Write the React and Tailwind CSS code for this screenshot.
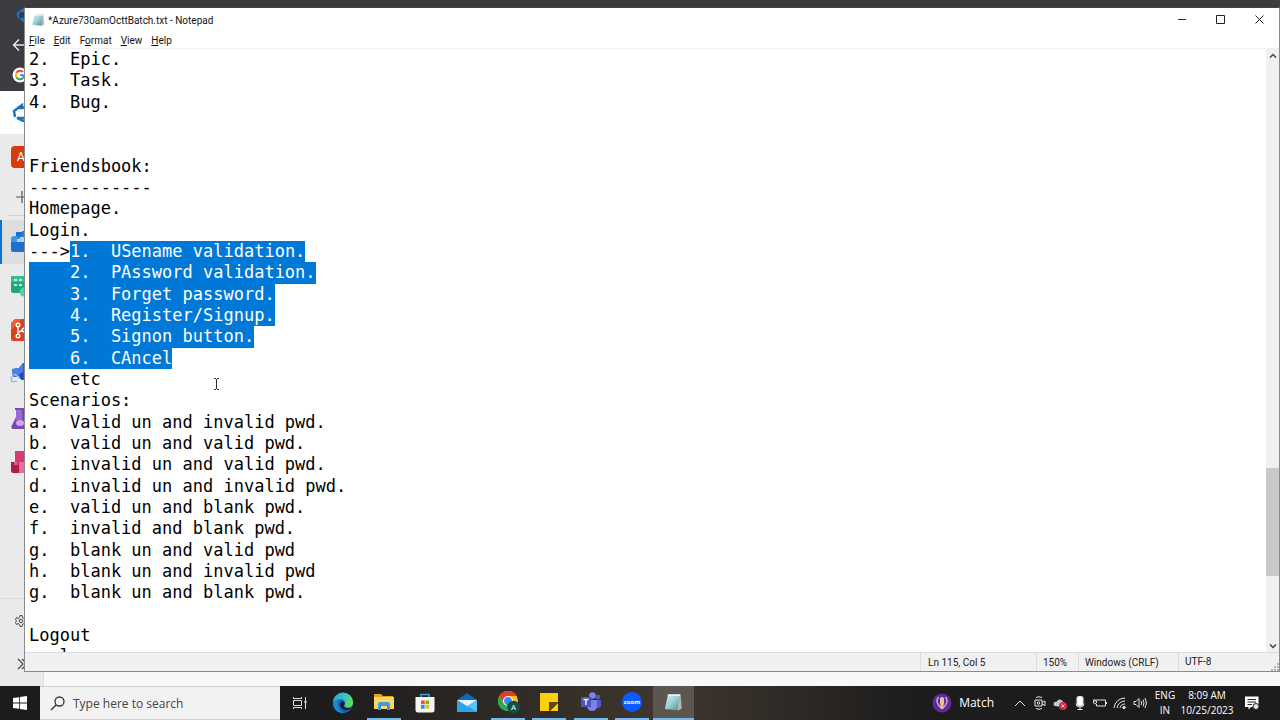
import React from 'react';

const LINES = [
  { text: '2.  Epic.' },
  { text: '3.  Task.' },
  { text: '4.  Bug.' },
  { text: '' },
  { text: '' },
  { text: 'Friendsbook:' },
  { text: '------------' },
  { text: 'Homepage.' },
  { text: 'Login.' },
  { text: '--->', selected: '1.  USename validation.' },
  { text: '', selected: '    2.  PAssword validation.' },
  { text: '', selected: '    3.  Forget password.' },
  { text: '', selected: '    4.  Register/Signup.' },
  { text: '', selected: '    5.  Signon button.' },
  { text: '', selected: '    6.  CAncel' },
  { text: '    etc' },
  { text: 'Scenarios:' },
  { text: 'a.  Valid un and invalid pwd.' },
  { text: 'b.  valid un and valid pwd.' },
  { text: 'c.  invalid un and valid pwd.' },
  { text: 'd.  invalid un and invalid pwd.' },
  { text: 'e.  valid un and blank pwd.' },
  { text: 'f.  invalid and blank pwd.' },
  { text: 'g.  blank un and valid pwd' },
  { text: 'h.  blank un and invalid pwd' },
  { text: 'g.  blank un and blank pwd.' },
  { text: '' },
  { text: 'Logout' },
  { text: '   l' },
  { text: '' },
];

const NotepadIcon = ({ className }) => (
  <svg viewBox="0 0 16 16" className={className}>
    <defs>
      <linearGradient id="pad" x1="0" y1="0" x2="1" y2="1">
        <stop offset="0" stopColor="#d9f1f1" />
        <stop offset="0.5" stopColor="#9ccfd3" />
        <stop offset="1" stopColor="#3f8f98" />
      </linearGradient>
    </defs>
    <path d="M5 2 L14 1.5 L15 13 L12 15 Z" fill="#b9b7ab" />
    <path d="M4 2 L13.5 2 L11.5 14.5 L1.5 13.5 Z" fill="url(#pad)" />
    <path d="M4 2 L13.5 2 L13.3 3.2 L3.8 3.2 Z" fill="#eef6f5" />
  </svg>
);

const DevOpsMark = ({ className }) => (
  <svg viewBox="0 0 20 20" className={className} fill="none" stroke="#1277c9" strokeWidth="2.4">
    <path d="M3 14 L2 8 L6 5 H11 L16 2 V16 L11 18 L5 15 H15" />
    <path d="M6 5 L10 2 V5" />
  </svg>
);

const GoogleIcon = () => (
  <svg viewBox="0 0 16 16" className="w-4 h-4">
    <circle cx="8" cy="8" r="7.5" fill="#fff" />
    <g fill="none" strokeWidth="2">
      <path d="M4.4 5.8 A4.2 4.2 0 0 1 11 5" stroke="#ea4335" />
      <path d="M4.4 10.2 A4.2 4.2 0 0 1 4.4 5.8" stroke="#fbbc05" />
      <path d="M11 11 A4.2 4.2 0 0 1 4.4 10.2" stroke="#34a853" />
      <path d="M8 8.2 H12.2 A4.2 4.2 0 0 1 11 11" stroke="#4285f4" />
    </g>
  </svg>
);

const BoardsIcon = () => (
  <svg viewBox="0 0 24 24" className="w-6 h-6">
    <path d="M1 9 H6 V2 H22 V22 H3 Q1 22 1 20 Z" fill="#1d6fd0" />
    <path d="M1 9 Q1 6 4 6 H24 V12 H1 Z" fill="#3b97ea" />
    <path d="M7 6 H12 V1 H20 V8 H7 Z" fill="#2a7edb" />
    <path d="M7 9 H10 V7 H15 V9 H24 V12 H7 Z" fill="#a9d6fa" />
  </svg>
);

const PlansIcon = () => (
  <svg viewBox="0 0 24 24" className="w-6 h-6">
    <path d="M1 2 H24 V19 H3 Q1 19 1 17 Z" fill="#1fa97a" />
    <path d="M1 2 H24 V8 H1 Z" fill="#33c08f" />
    <path d="M4 6 H7 M9 6 H12 M4 11 H7 M9 11 H12" stroke="#b7efd9" strokeWidth="2" />
    <circle cx="14" cy="18" r="4.5" fill="#54d3a4" />
  </svg>
);

const ReposIcon = () => (
  <svg viewBox="0 0 24 24" className="w-6 h-6">
    <path d="M5 1 H24 V23 H3 Q1 23 1 21 V5 Z" fill="#d8431c" />
    <path d="M1 5 L5 1 H12 L1 12 Z" fill="#e7623a" />
    <g fill="none" stroke="#fff" strokeWidth="1.4">
      <circle cx="8" cy="7" r="1.8" />
      <circle cx="8" cy="18" r="1.8" />
      <circle cx="14" cy="12" r="1.8" />
      <path d="M8 9 V16 M9 14 L12.5 12.5" />
    </g>
  </svg>
);

const PipelinesIcon = () => (
  <svg viewBox="0 0 24 24" className="w-6 h-6">
    <path d="M2 7 L9 6 L13 1 L24 1 V18 H12 L8 15 L3 15 Z" fill="#2b5fd0" />
    <path d="M2 7 L9 6 L13 1 V10 L6 14 L3 15 Z" fill="#4a80e6" />
    <path d="M8 15 L13 10 V18 Z" fill="#1c46a8" />
    <path d="M1.5 14 V19.5 H7 M4 12 L10 16" fill="none" stroke="#9dbcf2" strokeWidth="1.6" />
  </svg>
);

const TestIcon = () => (
  <svg viewBox="0 0 24 24" className="w-6 h-6">
    <path d="M5 2 H18 V4 H17 V10 L23 21 Q23 23 21 23 H3 Q1 23 1.5 20 L6 11 V4 H5 Z" fill="#7b46b5" />
    <path d="M6 4 H12 V14 H4.5 L6 11 Z" fill="#9a6bd0" />
    <ellipse cx="10" cy="17" rx="4" ry="3" fill="#cda8f0" />
  </svg>
);

const ArtifactsIcon = () => (
  <svg viewBox="0 0 24 24" className="w-6 h-6">
    <path d="M5 1 H20 V13 H5 Z" fill="#d63a72" />
    <path d="M1 12 H10 V23 H3 Q1 23 1 21 Z" fill="#a81f4c" />
    <path d="M9 12 H23 V23 H9 Z" fill="#f06c98" />
    <path d="M4 12 H8 V15 H4 Z" fill="#e6568a" />
  </svg>
);

const RAIL = [
  { name: 'Boards', icon: <BoardsIcon />, active: true },
  { name: 'Plans', icon: <PlansIcon /> },
  { name: 'Repos', icon: <ReposIcon /> },
  { name: 'Pipelines', icon: <PipelinesIcon /> },
  { name: 'Test Plans', icon: <TestIcon /> },
  { name: 'Artifacts', icon: <ArtifactsIcon /> },
];

const BrowserBackdrop = () => (
  <div className="flex flex-col h-full bg-[#f8f8f8]">
    <div className="flex flex-col h-[91px] pl-3 bg-[#3b3b40] shrink-0">
      <div className="flex items-center h-[30px] pl-1">
        <DevOpsMark className="w-4 h-4" />
      </div>
      <div className="flex items-center h-[30px]">
        <svg viewBox="0 0 16 16" className="w-4 h-4" fill="none" stroke="#e8e8e8" strokeWidth="1.5">
          <path d="M16 8 H2 M7 2.5 L1.5 8 L7 13.5" />
        </svg>
      </div>
      <div className="flex items-center h-[30px]">
        <GoogleIcon />
      </div>
    </div>
    <div className="flex items-center h-[43px] pl-3 bg-white shrink-0">
      <DevOpsMark className="w-5 h-5" />
    </div>
    <nav className="flex flex-col flex-1 w-11 bg-[#eaeaea] border-r border-[#dcdcdc]">
      <div className="flex items-center h-[45px] pl-[11px]">
        <span className="flex items-center justify-center w-5 h-[22px] rounded bg-[#d83b0c] text-white text-xs">
          A
        </span>
      </div>
      <div className="flex items-center h-[36px] pl-4">
        <svg viewBox="0 0 12 12" className="w-3 h-3" stroke="#555" strokeWidth="1.2">
          <path d="M6 0 V12 M0 6 H12" />
        </svg>
      </div>
      <div className="h-[5px] ml-2 border-t border-[#d4d4d4]" />
      {RAIL.map((item) => (
        <div
          key={item.name}
          className={
            item.active
              ? 'flex items-center h-[44px] pl-2 bg-[#dedede] border-l-2 border-[#0b74d1]'
              : 'flex items-center h-[44px] pl-[10px]'
          }
        >
          {item.icon}
        </div>
      ))}
      <div className="flex-1" />
      <div className="flex items-center h-11 pl-[15px] border-t border-[#dcdcdc]">
        <svg viewBox="0 0 24 24" className="w-3 h-3" fill="none" stroke="#444" strokeWidth="2">
          <path d="M10 1 H14 L15 5 L18 7 L21 5 L23 9 L21 12 L23 15 L21 19 L18 17 L15 19 L14 23 H10 L9 19 L6 17 L3 19 L1 15 L3 12 L1 9 L3 5 L6 7 L9 5 Z" />
          <circle cx="12" cy="12" r="3.5" />
        </svg>
      </div>
      <div className="flex items-center h-11 pl-4">
        <svg viewBox="0 0 12 12" className="w-3 h-3" fill="none" stroke="#444" strokeWidth="1.2">
          <path d="M2 1 L7 6 L2 11 M6 1 L11 6 L6 11" />
        </svg>
      </div>
    </nav>
  </div>
);

const TitleBar = () => (
  <div className="flex items-center h-[23px] pl-1.5 shrink-0">
    <NotepadIcon className="w-3.5 h-3.5" />
    <h1 className="pt-0.5 pl-[3px] text-[10px] text-[#111]">*Azure730amOcttBatch.txt - Notepad</h1>
    <div className="flex h-full ml-auto">
      <button aria-label="Minimize" className="flex items-center justify-center w-[39px]">
        <svg viewBox="0 0 10 10" className="w-2.5 h-2.5" stroke="#333">
          <path d="M1 4.5 H9" />
        </svg>
      </button>
      <button aria-label="Maximize" className="flex items-center justify-center w-[39px]">
        <svg viewBox="0 0 10 10" className="w-2.5 h-2.5" fill="none" stroke="#222">
          <path d="M0.5 0.5 H8.5 V8.5 H0.5 Z" />
        </svg>
      </button>
      <button aria-label="Close" className="flex items-center justify-center w-[39px]">
        <svg viewBox="0 0 10 10" className="w-2.5 h-2.5" stroke="#222">
          <path d="M0.5 0.5 L8.5 8.5 M8.5 0.5 L0.5 8.5" />
        </svg>
      </button>
    </div>
  </div>
);

const MenuBar = () => (
  <div className="flex items-center gap-[9px] h-[18px] pt-0.5 pl-1 border-b border-[#f0f0f0] text-[10px] text-[#111] shrink-0">
    <button><u>F</u>ile</button>
    <button><u>E</u>dit</button>
    <button>F<u>o</u>rmat</button>
    <button><u>V</u>iew</button>
    <button><u>H</u>elp</button>
  </div>
);

const Editor = () => (
  <div className="flex flex-1 min-h-0">
    <div className="flex-1 pl-1 overflow-hidden">
      <div
        role="textbox"
        aria-multiline="true"
        aria-label="Text editor"
        contentEditable
        suppressContentEditableWarning
        spellCheck={false}
        className="grid h-160 auto-rows-fr whitespace-pre text-black font-['DejaVu_Sans_Mono',monospace] text-[17px] leading-[21px]"
      >
        {LINES.map((line, i) => (
          <div key={i} className="flex">
            <span>{line.text}</span>
            {line.selected && <span className="bg-[#0078d7] text-white">{line.selected}</span>}
          </div>
        ))}
      </div>
    </div>
    <div className="flex flex-col w-[13px] bg-[#f0f0f0]">
      <button aria-label="Scroll up" className="flex items-center justify-center h-[13px]">
        <svg viewBox="0 0 8 8" className="w-2 h-2" fill="none" stroke="#444" strokeWidth="1.5">
          <path d="M1 5.5 L4 2.5 L7 5.5" />
        </svg>
      </button>
      <div className="grow-406 basis-0" />
      <div className="grow-108 basis-0 bg-[#c9c9c9]" />
      <div className="grow-63 basis-0" />
      <button aria-label="Scroll down" className="flex items-center justify-center h-[13px]">
        <svg viewBox="0 0 8 8" className="w-2 h-2" fill="none" stroke="#444" strokeWidth="1.5">
          <path d="M1 2.5 L4 5.5 L7 2.5" />
        </svg>
      </button>
    </div>
  </div>
);

const StatusBar = () => (
  <div className="flex justify-end h-[19px] bg-[#f0f0f0] border-t border-[#dcdcdc] text-[10px] leading-[19px] text-[#222] shrink-0">
    <div className="w-[116px] pl-[7px] border-l border-[#dcdcdc]">Ln 115, Col 5</div>
    <div className="w-[42px] pl-1.5 border-l border-[#dcdcdc]">150%</div>
    <div className="w-[100px] pl-1.5 border-l border-[#dcdcdc]">Windows (CRLF)</div>
    <div className="flex items-end justify-between w-[101px] pl-1.5 border-l border-[#dcdcdc]">
      UTF-8
      <svg viewBox="0 0 8 8" className="w-2 h-2" fill="#b5b5b5">
        <path d="M6 0h2v2h-2z M3 3h2v2h-2z M6 3h2v2h-2z M0 6h2v2h-2z M3 6h2v2h-2z M6 6h2v2h-2z" />
      </svg>
    </div>
  </div>
);

const EdgeIcon = () => (
  <svg viewBox="0 0 24 24" className="w-[22px] h-[22px]">
    <defs>
      <linearGradient id="edgeTop" x1="0" y1="0" x2="1" y2="0.3">
        <stop offset="0" stopColor="#2aa5e0" />
        <stop offset="0.6" stopColor="#35c1c9" />
        <stop offset="1" stopColor="#5fdb5a" />
      </linearGradient>
    </defs>
    <circle cx="12" cy="12" r="11" fill="#1464b4" />
    <path d="M1 12 A11 11 0 0 1 23 11 C23.5 15 20 17 17 17 C14 17 13 15.5 14 14 C15.5 11 13 8 9.5 8 C5 8 2 10 1 12 Z" fill="url(#edgeTop)" />
    <path d="M1 12 C2 9 5 7.5 9 8 C6 10 5.5 15 8 18.5 C10 21.5 13 22.5 15 22.6 C8 24.5 1 19.5 1 12 Z" fill="#1b86d8" />
    <path d="M10 11 C7 14 10 20 15 20 C18 20 20 19 21.5 17 C19 18.5 14 18 13 15.5 C12.6 14 14.5 13 13.5 11.5 C12.5 10 11 10 10 11 Z" fill="#1d2227" />
  </svg>
);

const ExplorerIcon = () => (
  <svg viewBox="0 0 22 20" className="w-[22px] h-5">
    <path d="M1 2 H8 L10 4 H20 V8 H1 Z" fill="#e5a31d" />
    <path d="M1 5 H21 V17 H1 Z" fill="#fbd667" />
    <path d="M5 18 V12 Q5 10 7 10 H15 Q17 10 17 12 V18 H14 V14 H8 V18 Z" fill="#3f9be0" />
  </svg>
);

const StoreIcon = () => (
  <svg viewBox="0 0 20 20" className="w-5 h-5">
    <path d="M6 5 V1.5 H14 V5" fill="none" stroke="#36a3e3" strokeWidth="1.6" />
    <path d="M0.5 4 H19.5 V17 Q19.5 19.5 17 19.5 H3 Q0.5 19.5 0.5 17 Z" fill="#f5f5f5" />
    <path d="M6 7.5 h3.7 v3.7 h-3.7 z" fill="#f25022" />
    <path d="M10.5 7.5 h3.7 v3.7 h-3.7 z" fill="#7fba00" />
    <path d="M6 12 h3.7 v3.7 h-3.7 z" fill="#00a4ef" />
    <path d="M10.5 12 h3.7 v3.7 h-3.7 z" fill="#ffb900" />
  </svg>
);

const MailIcon = () => (
  <svg viewBox="0 0 22 20" className="w-[22px] h-5">
    <path d="M1 7 L11 0 L21 7 V19 H1 Z" fill="#1168b8" />
    <path d="M1 7 H21 L11 14 Z" fill="#e9f5fd" />
    <path d="M1 7 L21 19 H1 Z" fill="#2fa4ea" />
    <path d="M21 7 L11 13 L21 19 Z" fill="#56c2f7" />
  </svg>
);

const ChromeIcon = () => (
  <svg viewBox="0 0 24 24" className="w-6 h-6">
    <circle cx="12" cy="11" r="10" fill="#fbc116" />
    <path d="M3.3 6 A10 10 0 0 1 20.7 6 H12 L7.5 13 Z" fill="#e33b2e" />
    <path d="M3.3 6 A10 10 0 0 0 12 21 L16 13.5 H7.8 Z" fill="#2da94f" />
    <circle cx="12" cy="11" r="5" fill="#fff" />
    <circle cx="12" cy="11" r="3.9" fill="#4285f4" />
    <circle cx="17.5" cy="17" r="6.3" fill="#0b5345" />
    <text x="17.5" y="19.8" fontSize="8" textAnchor="middle" fill="#fff">A</text>
  </svg>
);

const StickyIcon = () => (
  <svg viewBox="0 0 20 20" className="w-5 h-5">
    <path d="M1 1 H19 V19 H1 Z" fill="#fdd007" />
    <path d="M10 10 H19 V19 H10 Z" fill="#3b3322" />
    <path d="M10 10 H19 L10 19 Z" fill="#57491c" />
    <path d="M19 11 V19 H11 Z" fill="#fdd007" />
  </svg>
);

const TeamsIcon = () => (
  <svg viewBox="0 0 22 20" className="w-[22px] h-5">
    <circle cx="18" cy="5" r="2.3" fill="#5059c9" />
    <circle cx="12.5" cy="3.5" r="3.3" fill="#7b83eb" />
    <path d="M15 8 H21 V14 Q20 17 16 16 Z" fill="#5059c9" />
    <path d="M7 8 H17 V14 Q16.5 19 12 19 Q7.5 19 7 14 Z" fill="#7b83eb" />
    <path d="M1 5 H11 V15 H1 Z" fill="#4b53bc" />
    <path d="M3.5 7.5 H8.5 M6 7.5 V13" stroke="#fff" strokeWidth="1.4" />
  </svg>
);

const ZoomIcon = () => (
  <span className="flex items-center justify-center w-5 h-5 rounded-full bg-[#0b5cff] text-[6px] font-bold text-white">
    zoom
  </span>
);

const APPS = [
  { name: 'Edge', icon: <EdgeIcon /> },
  { name: 'File Explorer', icon: <ExplorerIcon />, open: true },
  { name: 'Store', icon: <StoreIcon /> },
  { name: 'Mail', icon: <MailIcon /> },
  { name: 'Chrome', icon: <ChromeIcon />, open: true },
  { name: 'Sticky Notes', icon: <StickyIcon />, open: true },
  { name: 'Teams', icon: <TeamsIcon />, open: true },
  { name: 'Zoom', icon: <ZoomIcon />, open: true },
  { name: 'Notepad', icon: <NotepadIcon className="w-5 h-5" />, open: true, active: true },
];

const TRAY = [
  {
    name: 'Show hidden icons',
    icon: <path d="M3 11 L8 6 L13 11" />,
  },
  {
    name: 'Meet now',
    icon: (
      <>
        <path d="M3 5 H10 V11 H3 Z M10 7.5 L13 6 V10.5 L10 9 M4 2.5 Q7 1 10 2.5 M4 13.5 Q7 15 10 13.5" />
        <circle cx="6.5" cy="8" r="1.2" />
      </>
    ),
  },
  {
    name: 'OneDrive',
    icon: (
      <>
        <path d="M3 11 Q0.5 10 2 7.5 Q3.5 6.5 4.5 7 Q6 3.5 9.5 5 Q11 6 11 7 L13 9 L9 12 Z" fill="#c9c9c9" stroke="none" />
        <circle cx="11" cy="11" r="4" fill="#d9283c" stroke="none" />
        <path d="M9.5 9.5 L12.5 12.5 M12.5 9.5 L9.5 12.5" />
      </>
    ),
  },
  {
    name: 'Microphone',
    icon: (
      <>
        <rect x="5" y="1.5" width="6" height="9" rx="1.5" fill="#fff" />
        <path d="M4 8.5 Q4 12 8 12 Q12 12 12 8.5 M8 12 V14.5 M5.5 14.5 H10.5" />
      </>
    ),
  },
  {
    name: 'Battery',
    icon: <path d="M5 5 H13.5 V11 H4.5 V9 M14.5 7 V9 M2 4 V6 M4 4 V6 M1.5 6 H4.5 V8 L3 9 L1.5 8 Z" />,
  },
  {
    name: 'Network',
    icon: (
      <>
        <path d="M2 13 A11 11 0 0 1 13 3 M5 13 A8 8 0 0 1 13 6 M8 13 A5 5 0 0 1 13 9" />
        <circle cx="12" cy="12.5" r="1.2" fill="#ddd" />
      </>
    ),
  },
  {
    name: 'Volume',
    icon: <path d="M2 6.5 H4 L7 3.5 V12.5 L4 9.5 H2 Z M9 6 Q10.5 8 9 10 M11 4.5 Q13 8 11 11.5 M13 3 Q16 8 13 13" />,
  },
];

const Taskbar = () => (
  <footer className="flex h-[34px] bg-linear-to-r from-[#1c1c1c] from-25% via-[#40372e] via-52% to-[#1c1c1c] to-72% font-['Open_Sans',sans-serif] text-white shrink-0">
    <button aria-label="Start" className="flex items-center justify-center w-10">
      <svg viewBox="0 0 14 14" className="w-3.5 h-3.5" fill="#fff">
        <path d="M0 2 L6 1.2 V6.6 H0 Z M6.8 1 L14 0 V6.6 H6.8 Z M0 7.4 H6 V12.8 L0 12 Z M6.8 7.4 H14 V14 L6.8 13 Z" />
      </svg>
    </button>
    <label className="flex items-center w-60 pl-2.5 gap-2 bg-[#f2f2f2] border-y border-[#cfcfcf]">
      <svg viewBox="0 0 15 15" className="w-[15px] h-[15px]" fill="none" stroke="#333" strokeWidth="1.3">
        <circle cx="9.5" cy="5.5" r="4.5" />
        <path d="M6.3 8.7 L1 14" />
      </svg>
      <input
        type="text"
        aria-label="Search"
        placeholder="Type here to search"
        className="w-44 pt-0.5 text-xs outline-none placeholder:text-[#444]"
      />
    </label>
    <button aria-label="Task view" className="flex items-center justify-center w-10">
      <svg viewBox="0 0 16 14" className="w-4 h-3.5" fill="none" stroke="#ddd">
        <path d="M1.5 1 V2.5 H9.5 V1 M1.5 4.5 H9.5 V9.5 H1.5 Z M1.5 13 V11.5 H9.5 V13 M13.5 1 V13" />
        <path d="M12.5 5 H14.5 V7 H12.5 Z" fill="#ddd" stroke="none" />
      </svg>
    </button>
    <div className="grid grid-cols-9 w-[372px] ml-0.5">
      {APPS.map((app) => (
        <button
          key={app.name}
          aria-label={app.name}
          className={
            app.active
              ? 'flex flex-col items-center bg-[#5d564f]'
              : 'flex flex-col items-center'
          }
        >
          <span className="flex items-center flex-1">{app.icon}</span>
          {app.open && (
            <span className={app.active ? 'w-full h-0.5 bg-[#76b9ed]' : 'w-[34px] h-0.5 bg-[#76b9ed]'} />
          )}
        </button>
      ))}
    </div>
    <div className="flex items-center pr-2.5 ml-auto">
      <button className="flex items-center gap-[7px] pr-4 text-xs">
        <svg viewBox="0 0 20 20" className="w-5 h-5">
          <circle cx="10" cy="10" r="9.5" fill="#5b2aa0" />
          <path d="M6.5 4 Q3.5 8 6.5 12 L9 15 H11 L13.5 12 Q16.5 8 13.5 4" fill="none" stroke="#e7a5b0" strokeWidth="1.4" />
          <path d="M8 5 Q10 3 12 5 V10 L10.8 16 H9.2 L8 10 Z" fill="#e8c39a" />
        </svg>
        Match
      </button>
      {TRAY.map((item) => (
        <button key={item.name} aria-label={item.name} className="flex items-center justify-center w-5">
          <svg viewBox="0 0 16 16" className="w-4 h-4" fill="none" stroke="#e4e4e4">
            {item.icon}
          </svg>
        </button>
      ))}
      <button className="w-[30px] text-center text-[10px] leading-[15px]">
        ENG
        <br />
        IN
      </button>
      <button className="w-[54px] text-center text-[10px] leading-[15px] whitespace-nowrap">
        8:09 AM
        <br />
        10/25/2023
      </button>
      <button aria-label="Notifications" className="flex items-center justify-center w-9">
        <svg viewBox="0 0 16 16" className="w-4 h-4">
          <path d="M1 1.5 H14.5 V12 H7 L4.5 14.5 V12 H1 Z" fill="#fff" />
          <path d="M3.5 4.5 H12 M3.5 7 H12 M3.5 9.5 H8" stroke="#222" />
          <circle cx="12" cy="11.5" r="3" fill="#ddd" stroke="#222" />
        </svg>
      </button>
    </div>
  </footer>
);

const App = () => (
  <div className="flex flex-col h-screen overflow-hidden font-['Roboto',sans-serif]">
    <main className="relative flex-1 min-h-0">
      <BrowserBackdrop />
      <section className="absolute top-[7px] bottom-[14px] left-6 right-0 flex flex-col bg-white border border-[#8a8a8a] border-t-[#444]">
        <TitleBar />
        <MenuBar />
        <Editor />
        <StatusBar />
      </section>
      <svg viewBox="0 0 7 12" className="absolute top-[378px] left-[213px] w-[7px] h-3" fill="none" stroke="#333">
        <path d="M1 0.5 H3 M4 0.5 H6 M3.5 1 V11 M1 11.5 H3 M4 11.5 H6" />
      </svg>
    </main>
    <Taskbar />
  </div>
);

export default App;
